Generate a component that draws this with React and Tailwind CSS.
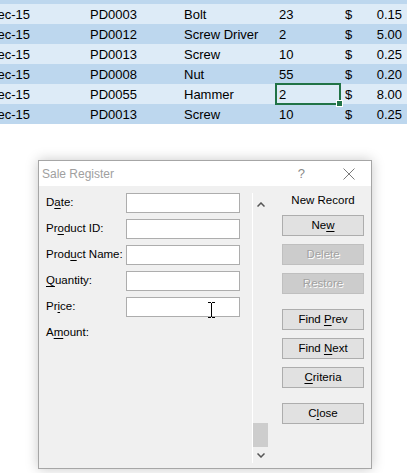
import React from "react";

const rows = [
  ["PD0003", "Bolt", "23", "0.15"],
  ["PD0012", "Screw Driver", "2", "5.00"],
  ["PD0013", "Screw", "10", "0.25"],
  ["PD0008", "Nut", "55", "0.20"],
  ["PD0055", "Hammer", "2", "8.00"],
  ["PD0013", "Screw", "10", "0.25"],
];

function SheetRow({ r, dark, selected }) {
  return (
    <div
      className={`flex h-[20px] pt-[2px] leading-[18px] text-black ${
        dark ? "bg-[#bdd7ee]" : "bg-[#ddebf7]"
      }`}
    >
      <div className="w-[30px] overflow-hidden flex justify-end whitespace-nowrap">
        {r ? "Dec-15" : ""}
      </div>
      <div className="w-[60px]" />
      <div className="w-[94px] whitespace-nowrap">{r ? r[0] : ""}</div>
      <div className="w-[92px] whitespace-nowrap">{r ? r[1] : ""}</div>
      <div className="w-[63px] pl-[3px] whitespace-nowrap relative">
        {r ? r[2] : ""}
        {selected && (
          <div className="absolute left-[-1px] right-[-2px] top-[-3px] bottom-[-1px] border-2 border-[#217346]">
            <div className="absolute right-[-4px] bottom-[-4px] w-[5px] h-[5px] bg-[#217346] border border-white box-content" />
          </div>
        )}
      </div>
      <div className="flex-1 flex justify-between pl-[6px] pr-[5px]">
        <span>$</span>
        <span>{r ? r[3] : ""}</span>
      </div>
    </div>
  );
}

function U({ pre, u, post }) {
  return (
    <span>
      {pre}
      <span className="underline underline-offset-[2px]">{u}</span>
      {post}
    </span>
  );
}

function Field({ label, input = true, cursor }) {
  return (
    <div className="flex h-[20px] items-center">
      <div className="w-[80px] whitespace-nowrap">{label}</div>
      {input && (
        <div className="relative w-[114px] h-[20px] bg-white border border-[#adadad]">
          {cursor && (
            <svg
              className="absolute left-[80px] top-[4px]"
              width="9"
              height="16"
              viewBox="0 0 9 16"
            >
              <path d="M1 0.5h3M5 0.5h3M4.5 1v14M1 15.5h3M5 15.5h3" stroke="#000" strokeWidth="1" fill="none" />
            </svg>
          )}
        </div>
      )}
    </div>
  );
}

function Btn({ children, disabled, className = "" }) {
  return (
    <div
      className={`h-[21px] w-[82px] flex items-center justify-center border ${
        disabled
          ? "bg-[#cccccc] border-[#bfbfbf] text-[#a2a2a2] [text-shadow:1px_1px_0_#ffffff]"
          : "bg-[#e1e1e1] border-[#adadad] text-black"
      } ${className}`}
    >
      {children}
    </div>
  );
}

export default function App() {
  return (
    <div className="w-[407px] h-[473px] bg-white overflow-hidden">
      <div
        className="h-[124px] overflow-hidden text-[13px]"
        style={{ fontFamily: '"Liberation Sans", Arial, sans-serif' }}
      >
        <div className="-mt-[16px]">
          <SheetRow dark />
        </div>
        {rows.map((r, i) => (
          <SheetRow key={i} r={r} dark={i % 2 === 1} selected={i === 4} />
        ))}
      </div>

      <div
        className="ml-[38px] mt-[36px] w-[334px] h-[309px] border border-[#a6a6a6] bg-[#f0f0f0] shadow-[0_0_12px_rgba(0,0,0,0.22)] text-[11.5px] text-black"
        style={{ fontFamily: '"Liberation Sans", Arial, sans-serif' }}
      >
        <div className="h-[25px] bg-white flex items-center">
          <span className="pl-[3px] text-[12px] text-[#a0a0a0]">Sale Register</span>
          <span className="ml-auto mr-[38px] text-[13px] text-[#8a8a8a]">?</span>
          <svg className="mr-[16px]" width="12" height="12" viewBox="0 0 12 12">
            <path d="M0.5 0.5L11.5 11.5M11.5 0.5L0.5 11.5" stroke="#7a7a7a" strokeWidth="1" />
          </svg>
        </div>
        <div className="flex h-[282px]">
          <div className="w-[213px] pl-[7px] pt-[7px] flex flex-col gap-[6px]">
            <Field label={<U pre="D" u="a" post="te:" />} />
            <Field label={<U pre="Pr" u="o" post="duct ID:" />} />
            <Field label={<U pre="Prod" u="u" post="ct Name:" />} />
            <Field label={<U pre="" u="Q" post="uantity:" />} />
            <Field label={<U pre="Pr" u="i" post="ce:" />} cursor />
            <Field label={<U pre="A" u="m" post="ount:" />} input={false} />
          </div>
          <div className="mt-[7px] mb-[5px] w-[16px] border-l border-white flex flex-col">
            <div className="h-[22px] flex items-center justify-center">
              <svg width="8" height="5" viewBox="0 0 8 5">
                <path d="M0.5 4.5L4 1L7.5 4.5" stroke="#555" strokeWidth="1.5" fill="none" />
              </svg>
            </div>
            <div className="flex-1" />
            <div className="h-[24px] bg-[#cdcdcd]" />
            <div className="h-[16px] flex items-center justify-center">
              <svg width="8" height="5" viewBox="0 0 8 5">
                <path d="M0.5 0.5L4 4L7.5 0.5" stroke="#555" strokeWidth="1.5" fill="none" />
              </svg>
            </div>
          </div>
          <div className="ml-[14px] w-[82px] flex flex-col">
            <div className="mt-[7px] h-[16px] flex items-center justify-center whitespace-nowrap">
              New Record
            </div>
            <Btn className="mt-[6px]">
              <U pre="Ne" u="w" post="" />
            </Btn>
            <Btn className="mt-[8px]" disabled>
              Delete
            </Btn>
            <Btn className="mt-[8px]" disabled>
              Restore
            </Btn>
            <Btn className="mt-[15px]">
              <U pre="Find " u="P" post="rev" />
            </Btn>
            <Btn className="mt-[8px]">
              <U pre="Find " u="N" post="ext" />
            </Btn>
            <Btn className="mt-[8px]">
              <U pre="" u="C" post="riteria" />
            </Btn>
            <Btn className="mt-[15px]">
              <U pre="C" u="l" post="ose" />
            </Btn>
          </div>
        </div>
      </div>
    </div>
  );
}
